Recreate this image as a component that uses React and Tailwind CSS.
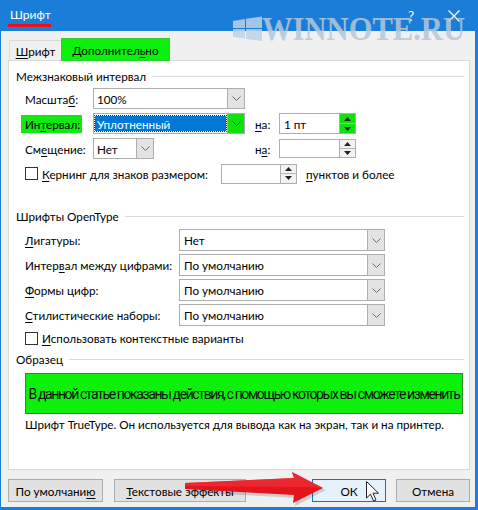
import React from "react";

const U = ({ children }) => (
  <span className="underline underline-offset-[2px] decoration-[1px]">{children}</span>
);

function Chevron({ dark = false }) {
  return (
    <svg width="9" height="5" viewBox="0 0 9 5">
      <polyline points="0.5,0.5 4.5,4.5 8.5,0.5" fill="none" stroke={dark ? "#2a5a2a" : "#6a6a6a"} strokeWidth="1" />
    </svg>
  );
}

function Select({ w, h = "h-[21px]", children, green = false }) {
  return (
    <div className={"flex border border-[#adadad] bg-white " + w + " " + h}>
      <div className="flex-1 flex items-center min-w-0">{children}</div>
      <div
        className={
          "w-[17px] shrink-0 flex items-center justify-center border-l border-[#adadad] " +
          (green ? "bg-[#10e010]" : "bg-[#e3e3e3]")
        }
      >
        <Chevron dark={green} />
      </div>
    </div>
  );
}

function Tri({ up }) {
  return (
    <svg width="7" height="4" viewBox="0 0 7 4">
      {up ? <polygon points="0,4 3.5,0 7,4" fill="#222" /> : <polygon points="0,0 3.5,4 7,0" fill="#222" />}
    </svg>
  );
}

function Spin({ w, h, value, green = false }) {
  return (
    <div className={"flex border border-[#adadad] bg-white " + w + " " + h}>
      <div className="flex-1 flex items-center pl-[4px]">{value}</div>
      <div
        className={
          "w-[16px] shrink-0 flex flex-col border-l border-[#adadad] " + (green ? "bg-[#10e010]" : "bg-[#f2f2f2]")
        }
      >
        <div className="flex-1 flex items-center justify-center border-b border-[#b5b5b5]">
          <Tri up />
        </div>
        <div className="flex-1 flex items-center justify-center">
          <Tri />
        </div>
      </div>
    </div>
  );
}

function Header({ children, mt }) {
  return (
    <div className={"flex items-center h-[16px] pl-[7px] pr-[5px] gap-[6px] " + mt}>
      <span className="whitespace-nowrap">{children}</span>
      <div className="flex-1 h-px bg-[#dcdcdc]" />
    </div>
  );
}

function Checkbox() {
  return <div className="w-[13px] h-[13px] shrink-0 border border-[#333] bg-white" />;
}

function Button({ w, children, primary = false }) {
  return (
    <div
      className={
        "h-[23px] flex items-center justify-center border " +
        w +
        " " +
        (primary ? "border-[#0078d7] bg-[#e5f1fb]" : "border-[#adadad] bg-[#e1e1e1]")
      }
    >
      {children}
    </div>
  );
}

export default function App() {
  return (
    <div className="relative w-[478px] h-[510px] overflow-hidden bg-[#1a7dd7] text-[11.7px] leading-[16px] text-black font-['Lato',sans-serif]">
      {/* title bar */}
      <div className="h-[31px] flex items-start pl-[8px] pt-[7px] text-white">
        <div className="flex flex-col">
          <span className="px-[2px] text-[12px]">Шрифт</span>
          <div className="h-[3px] w-[43px] bg-[#e8101a] mt-[1px]" />
        </div>
        <div className="ml-auto flex items-center pr-[18px] gap-[34px] mt-[1px]">
          <span className="text-[13px]">?</span>
          <svg width="12" height="12" viewBox="0 0 12 12">
            <path d="M0.5 0.5 L11.5 11.5 M11.5 0.5 L0.5 11.5" stroke="#fff" strokeWidth="1.2" />
          </svg>
        </div>
      </div>

      {/* client */}
      <div className="ml-[1px] w-[474px] h-[476px] bg-[#f0f0f0] flex flex-col">
        {/* tabs */}
        <div className="h-[30px] flex items-end pl-[8px]">
          <div className="w-[52px] h-[21px] border-l border-t border-[#d9d9d9] flex items-start justify-center pt-[2px]">
            <span>
              <U>Ш</U>рифт
            </span>
          </div>
          <div className="relative z-10 w-[109px] h-[23px] bg-[#0cf00c] border border-[#2fcf2f] flex items-center justify-center">
            <span>
              Дополнител<U>ь</U>но
            </span>
          </div>
        </div>

        {/* panel */}
        <div className="relative -mt-[1px] ml-[7px] w-[462px] h-[410px] border border-[#d9d9d9] bg-white flex flex-col">
          <Header mt="mt-[7px]">Межзнаковый интервал</Header>

          <div className="mt-[4px] h-[21px] flex items-center pl-[16px]">
            <span className="w-[68px]">
              Масшта<U>б</U>:
            </span>
            <Select w="w-[152px]">
              <span className="pl-[3px]">100%</span>
            </Select>
          </div>

          <div className="mt-[4px] h-[21px] flex items-center pl-[16px]">
            <span className="-ml-[4px] w-[61px] pl-[4px] h-[18px] flex items-center bg-[#10ea10]">
              <span>
                Ин<U>т</U>ервал:
              </span>
            </span>
            <span className="w-[11px]" />
            <Select w="w-[152px]" green>
              <div className="mx-[1px] flex-1 h-[15px] bg-[#0078d7] text-white flex items-center pl-[2px] outline-dotted outline-1 outline-[#333]">
                Уплотненный
              </div>
            </Select>
            <span className="ml-[10px] w-[24px]">
              <U>н</U>а:
            </span>
            <Spin w="w-[77px]" h="h-[21px]" value="1 пт" green />
          </div>

          <div className="mt-[4px] h-[21px] flex items-center pl-[16px]">
            <span className="w-[68px]">
              См<U>е</U>щение:
            </span>
            <div className="w-[152px]">
              <Select w="w-[61px]">
                <span className="pl-[3px]">Нет</span>
              </Select>
            </div>
            <span className="ml-[10px] w-[24px]">
              н<U>а</U>:
            </span>
            <Spin w="w-[77px]" h="h-[19px]" value="" />
          </div>

          <div className="mt-[4px] h-[21px] flex items-center pl-[16px]">
            <Checkbox />
            <span className="ml-[4px] w-[179px] whitespace-nowrap">
              <U>К</U>ернинг для знаков размером:
            </span>
            <Spin w="w-[76px]" h="h-[20px]" value="" />
            <span className="ml-[9px]">
              <U>п</U>унктов и более
            </span>
          </div>

          <Header mt="mt-[24px]">Шрифты OpenType</Header>

          {[
            [<><U>Л</U>игатуры:</>, "Нет", "mt-[5px]"],
            [<>Интер<U>в</U>ал между цифрами:</>, "По умолчанию", "mt-[3px]"],
            [<><U>Ф</U>ормы цифр:</>, "По умолчанию", "mt-[3px]"],
            [<><U>С</U>тилистические наборы:</>, "По умолчанию", "mt-[3px]"],
          ].map(([label, val, mt], i) => (
            <div key={i} className={"h-[22px] flex items-center pl-[16px] " + mt}>
              <span className="w-[154px] whitespace-nowrap">{label}</span>
              <Select w="w-[206px]" h="h-[22px]">
                <span className="pl-[4px]">{val}</span>
              </Select>
            </div>
          ))}

          <div className="mt-[4px] h-[16px] flex items-center pl-[16px]">
            <Checkbox />
            <span className="ml-[4px]">
              <U>И</U>спользовать контекстные варианты
            </span>
          </div>

          <Header mt="mt-[5px]">Образец</Header>

          <div className="mt-[6px] ml-[16px] w-[438px] h-[41px] bg-[#0cf00c] border border-[#2c8a2c] flex items-center justify-center overflow-hidden">
            <span className="whitespace-nowrap text-[14px] tracking-[-1.4px] font-['Roboto',sans-serif] text-[#111]">
              В данной статье показаны действия, с помощью которых вы сможете изменить
            </span>
          </div>

          <div className="mt-[2px] h-[16px] pl-[16px] whitespace-nowrap">
            Шрифт TrueType. Он используется для вывода как на экран, так и на принтер.
          </div>
        </div>

        {/* buttons */}
        <div className="mt-[9px] ml-[7px] w-[462px] flex">
          <Button w="w-[95px]">
            <span>
              По умолчани<U>ю</U>
            </span>
          </Button>
          <div className="ml-[11px]">
            <Button w="w-[132px]">
              <span>
                <U>Т</U>екстовые эффекты
              </span>
            </Button>
          </div>
          <div className="ml-auto flex gap-[10px]">
            <Button w="w-[74px]" primary>
              ОК
            </Button>
            <Button w="w-[74px]">Отмена</Button>
          </div>
        </div>
      </div>

      {/* overlays: watermark, arrow, cursor */}
      <svg className="absolute inset-0 pointer-events-none" width="478" height="510" viewBox="0 0 478 510">
        <g fill="#bcd3e8" opacity="0.85">
          <polygon points="233,21 245,19 245,28 233,28" />
          <polygon points="246,18.8 262,16.5 262,28 246,28" />
          <polygon points="233,29 245,29 245,38.5 233,37" />
          <polygon points="246,29 262,29 262,41 246,39" />
        </g>
        <text
          x="262"
          y="40"
          textLength="203"
          lengthAdjust="spacingAndGlyphs"
          fontFamily="Liberation Serif, serif"
          fontWeight="bold"
          fontSize="33"
          fill="#b7c7d8"
          opacity="0.85"
        >
          WINNOTE.RU
        </text>
        <polygon
          points="188,486 296,481 294,475 326,490 295,506 296,498 188,492"
          fill="#000"
          opacity="0.15"
        />
        <polygon points="185,483 294,478 292,472 323,488 293,503 294,495 185,489" fill="#e4141c" />
        <polygon points="185,483 294,478 292,472 323,488 306,487 185,486" fill="#f0363c" opacity="0.6" />
        <path
          d="M366.5 481.5 L366.5 498 L370.5 494.2 L373.6 501 L376 500 L373 493.2 L378.5 493.2 Z"
          fill="#fff"
          stroke="#222"
          strokeWidth="1"
        />
      </svg>
    </div>
  );
}
